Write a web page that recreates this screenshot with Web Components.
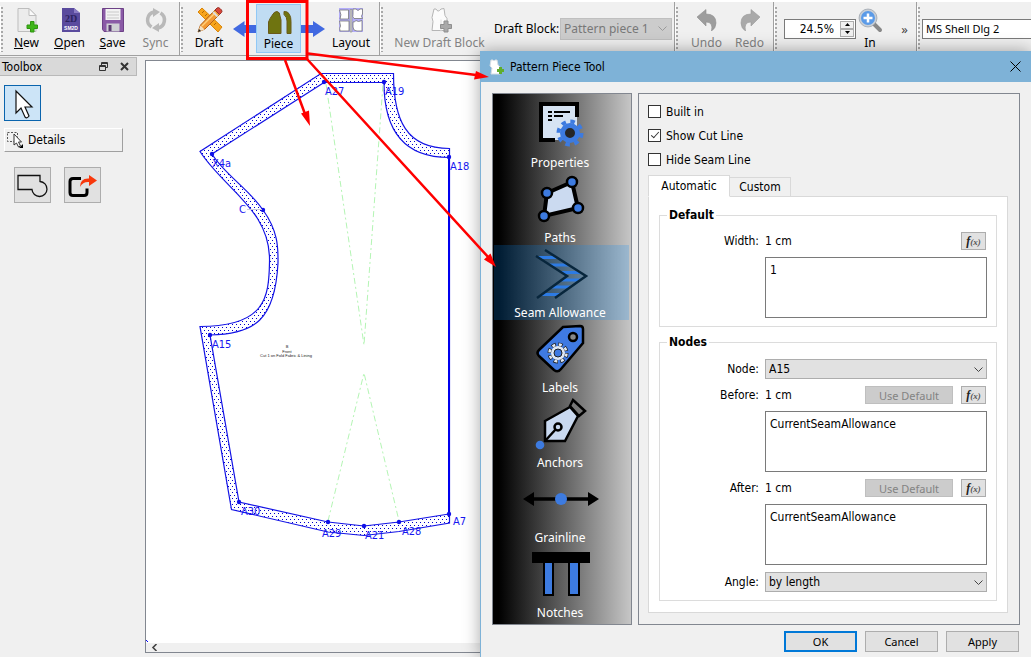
<!DOCTYPE html>
<html lang="en">
<head>
<meta charset="utf-8">
<title>Pattern Piece Tool</title>
<style>
  body {
    margin: 0;
    background: #f0f0f0;
    color: #000;
    --ui: "DejaVu Sans Condensed", "Noto Sans", sans-serif;
    --bar: "Noto Sans", "Open Sans", sans-serif;
    font: 12px/16px var(--ui);
  }
</style>
</head>
<body>
<app-window></app-window>

<script>
const define = (tag, html, setup) => {
  const tpl = document.createElement('template');
  tpl.innerHTML = html;
  customElements.define(tag, class extends HTMLElement {
    constructor() {
      super();
      this.attachShadow({ mode: 'open' }).append(tpl.content.cloneNode(true));
    }
    connectedCallback() { if (setup) setup(this, this.shadowRoot); }
  });
};

/* ---------- toolbar ---------- */
define('tool-group', `
<style>
  :host { display: flex; align-items: stretch; padding-right: 2px; border-right: 1px solid #a0a0a0; flex: none; }
  :host([last]) { flex: 1; border: 0; padding: 0; min-width: 0; }
  .grip { flex: none; width: 5px; margin: 4px 0 3px; box-shadow: inset 1px 0 #fff;
    background: radial-gradient(circle at 2px 2px, #a8a8a8 1px, transparent 1px) 0 0 / 5px 4px; }
  :host([roomy]) .grip { margin-right: 5px; }
</style>
<span class="grip"></span><slot></slot>`);

define('tool-button', `
<style>
  :host { display: block; flex: none; width: 43px; }
  :host([size="m"]) { width: 48px; }
  :host([size="l"]) { width: 52px; }
  :host([size="s"]) { width: 28px; }
  :host([size="xl"]) { width: 109px; }
  :host([active]) { width: 45px; }
  button { box-sizing: border-box; width: 100%; height: 100%; margin: 0; padding: 4px 0 0; border: 0; background: none;
    display: flex; flex-direction: column; align-items: center; font: 12px/18px var(--bar); color: #000; white-space: nowrap; }
  button:disabled { color: #838383; }
  :host([active]) button { height: 49px; margin-top: 2px; padding-top: 2px; border: 1px solid #90c8f6; background: #c0dcf3; }
  ::slotted(svg) { width: 28px; height: 28px; flex: none; }
  ::slotted(u) { text-decoration: underline; }
</style>
<button type="button"><slot name="icon"></slot><span><slot></slot></span></button>`,
(host, root) => { root.querySelector('button').disabled = host.hasAttribute('disabled'); });

define('flow-arrow', `
<style>
  :host { display: block; flex: none; width: 24px; padding-top: 18px; }
  :host([left]) { width: 23px; }
  :host([left]) svg { transform: scaleX(-1); }
  svg { display: block; width: 100%; height: 18px; }
</style>
<svg viewBox="0 0 24 18" preserveAspectRatio="none"><path d="M0 5H12V1L24 9L12 17V13H0Z" fill="#4169e1"/></svg>`);

define('main-toolbar', `
<style>
  :host { display: flex; height: 53px; border-top: 2px solid #fff; border-bottom: 1px solid #a0a0a0; overflow: hidden; font-family: var(--bar); }
  .lbl { align-self: center; width: 66px; line-height: 18px; }
  .sel { position: relative; align-self: center; }
  select { appearance: none; box-sizing: border-box; width: 112px; height: 22px; padding: 0 3px; margin: 0; border: 1px solid #bfbfbf; border-radius: 0;
    background: #ccc; color: #787878; font: 12px var(--bar); opacity: 1; }
  .sel svg { position: absolute; right: 5px; top: 7px; width: 9px; height: 8px; pointer-events: none; }
  .spin { align-self: center; display: flex; box-sizing: border-box; width: 72px; height: 20px; border: 1px solid #7a7a7a; background: #fff; }
  .spin input { flex: 1; min-width: 0; border: 0; padding: 0 5px 0 0; text-align: right; font: 12px var(--ui); background: none; }
  .spin span { display: flex; flex-direction: column; padding: 1px; gap: 0; }
  .spin button { width: 14px; height: 8px; padding: 0; border: 1px solid #adadad; background: #f0f0f0; display: grid; place-items: center; }
  .spin svg { width: 5px; height: 3px; }
  .more { border: 0; background: none; width: 30px; padding: 0 0 0 11px; font: 13px var(--bar); color: #444; }
  .font { flex: 1; min-width: 0; align-self: center; box-sizing: border-box; height: 20px; border: 1px solid #7a7a7a; border-right: 0; padding: 0 3px; font: 11px var(--bar); background: #fff; }
</style>
<tool-group>
  <tool-button><svg slot="icon" viewBox="0 0 28 28"><path d="M5 2.500h11l7 7V25.500H5z" fill="#ececec" stroke="#bdbdbd"/><path d="M16 2.500v7h7z" fill="#fafafa" stroke="#bdbdbd"/><path d="M17.500 15.500h3.500v3.500h3.500v3.500h-3.500v3.500h-3.500v-3.500H14v-3.500h3.500z" fill="#3fb618" stroke="#2f9410"/></svg><u>N</u>ew</tool-button>
  <tool-button><svg slot="icon" viewBox="0 0 28 28"><path d="M6 2h12l6 5v19H6z" fill="#5a4b9e"/><path d="M18 2v5h6z" fill="#8a7cc4"/><text x="15" y="16" font-family="Liberation Serif, serif" font-weight="bold" font-size="10" text-anchor="middle" fill="#2c2360">2D</text><text x="15" y="24" font-family="Liberation Sans, sans-serif" font-weight="bold" font-size="5" text-anchor="middle" fill="#fff">SM2D</text></svg><u>O</u>pen</tool-button>
  <tool-button><svg slot="icon" viewBox="0 0 28 28"><path d="M3.500 2.500h21v23H5l-1.500-2z" fill="#8a5aa6" stroke="#6d4187"/><path d="M6.500 3h15v11h-15z" fill="#f3f3f3"/><path d="M8 6h12M8 9h12M8 12h12" stroke="#c9c9c9"/><path d="M7.500 17.500h13v8h-13z" fill="#cfcfd4"/><path d="M9.500 19h3v6h-3z" fill="#5b3a73"/></svg><u>S</u>ave</tool-button>
  <tool-button disabled><svg slot="icon" viewBox="0 0 28 28"><g fill="none" stroke="#b9b9b9" stroke-width="3.500"><path d="M9.500 21A8.200 8.200 0 0 1 12 6"/><path d="M18.500 7A8.200 8.200 0 0 1 16 22"/></g><path d="M11 2l7 4-7 5zM17 26l-7-4 7-5z" fill="#b9b9b9"/></svg>Sync</tool-button>
</tool-group>
<tool-group>
  <tool-button size="m"><svg slot="icon" viewBox="0 0 28 28"><path d="M3 6l4-4 20 19-4 5z" fill="#f7a41d" stroke="#d98508"/><path d="M7 7l2-2m1 5l2-2m1 5l2-2m1 5l2-2m1 5l2-2" stroke="#b56a00"/><path d="M3 26l2.500-7L20 4l4.500 4.500L10 23z" fill="#f39a35" stroke="#b5651a"/><path d="M7 20L20.500 6.500" stroke="#ffcf7a" stroke-width="1.500"/><path d="M20 4l2-2q1.500-1 3 .5l1.500 1.500q1 1.500 0 2.500l-2 2z" fill="#d9463a" stroke="#963028"/><path d="M18 6l4.500 4.500" stroke="#ddd" stroke-width="2"/><path d="M3 26l2.500-6.500 4 4z" fill="#f4e0c0"/><path d="M3 26l1-3 2 2z" fill="#222"/></svg>Draft</tool-button>
  <flow-arrow left></flow-arrow>
  <tool-button active><svg slot="icon" viewBox="0 0 28 28"><path d="M3.500 26.500V15Q5 11 7 8.500 9 4.500 12 4.500q3 .5 3 4.500l1 4V26.500z" fill="#6f7410" stroke="#6a5a1a"/><path d="M19 4.500q4-.5 5.500 3 1.500 2.500 1.500 7v12h-4V14q0-4-3-6.500z" fill="#6f7410" stroke="#6a5a1a"/></svg>Piece</tool-button>
  <flow-arrow></flow-arrow>
  <tool-button size="l"><svg slot="icon" viewBox="0 0 28 28"><path d="M2 2h24v24H2z" fill="#b3adfa"/><g fill="#fff" stroke="#777" stroke-width=".8"><path d="M2.500 4h9V13H3q2-4-.5-9zM2.500 15H12v10H3q-1-3 .5-5zM16 3h3q2 3 4 0h2.500v5q-2 2 0 4.500H17q-2-2-1-4zM16 16q2 0 3-1.500 2 2 6 0V25h-5q-4 0-4-4z"/></g><path d="M13 3.500h2V26h-2z" fill="#ccc" stroke="#888" stroke-width=".6"/></svg>Layout</tool-button>
</tool-group>
<tool-group>
  <tool-button size="xl" disabled><svg slot="icon" viewBox="0 0 28 28"><path d="M8 3l2 0q2 4 5 0l3-.5 1 7 2 3v12H6l1-9-1-4z" fill="#fbfbfb" stroke="#b5b5b5"/><path d="M15 13.500v12" stroke="#ddd"/><path d="M18 15h4v3.500h3.500v4H22V26h-4v-3.500h-3.500v-4H18z" fill="#a9a9a9" stroke="#8f8f8f"/></svg>New Draft Block</tool-button>
  <label class="lbl" for="block">Draft Block:</label>
  <span class="sel"><select id="block" disabled><option>Pattern piece 1</option></select><svg viewBox="0 0 9 8"><path d="M0.500 1.500l4 4 4-4" fill="none" stroke="#9a9a9a"/></svg></span>
</tool-group>
<tool-group roomy>
  <tool-button disabled><svg slot="icon" viewBox="0 0 28 28"><path d="M4 11l9-7.500V8q10 0 10 9 0 5-4.500 8 2-9-5.500-9v4z" fill="#9d9d9d" stroke="#8e8e8e" stroke-width=".6"/></svg>Undo</tool-button>
  <tool-button disabled><svg slot="icon" viewBox="0 0 28 28"><path d="M24 11l-9-7.500V8Q5 8 5 17q0 5 4.500 8-2-9 5.500-9v4z" fill="#a9a9a9" stroke="#999" stroke-width=".6"/></svg>Redo</tool-button>
</tool-group>
<tool-group roomy>
  <span class="spin"><input type="text" value="24.5%" aria-label="Zoom"><span>
    <button type="button" aria-label="Zoom up"><svg viewBox="0 0 5 3"><path d="M0 3L2.500 0 5 3z"/></svg></button>
    <button type="button" aria-label="Zoom down"><svg viewBox="0 0 5 3"><path d="M0 0L2.500 3 5 0z"/></svg></button></span></span>
  <tool-button size="s"><svg slot="icon" viewBox="0 0 28 28"><path d="M17 17l7 7" stroke="#888" stroke-width="4" stroke-linecap="round"/><circle cx="12" cy="12" r="8" fill="#5b9be8" stroke="#c9cfd6" stroke-width="2"/><circle cx="12" cy="12" r="9" fill="none" stroke="#8b949e" stroke-width=".6"/><path d="M12 7.500v9M7.500 12h9" stroke="#fff" stroke-width="2.500"/></svg>In</tool-button>
  <button class="more" type="button" aria-label="More tools">»</button>
</tool-group>
<tool-group last><input class="font" type="text" value="MS Shell Dlg 2" aria-label="Font"></tool-group>`);

/* ---------- left dock ---------- */
define('tool-dock', `
<style>
  :host { display: block; flex: none; width: 137px; }
  header { display: flex; align-items: center; height: 17px; border: 1px solid #b9b9b9; border-left: 0; background: #d9d9d9; padding: 0 5px 0 2px; }
  header b { flex: 1; font-weight: normal; padding-top: 1px; }
  button { box-sizing: border-box; margin: 0; padding: 0; display: grid; place-items: center; font: inherit; }
  header button { border: 0; background: none; width: 13px; height: 13px; margin-left: 8px; }
  .tools { display: flex; flex-direction: column; align-items: flex-start; padding: 9px 0 0 4px; }
  .tile { width: 37px; height: 36px; border: 1px solid #adadad; background: #e1e1e1; }
  .on { border-color: #0a64ad; background: #cce4f7; }
  .section { display: flex; align-items: center; gap: 4px; width: 119px; height: 24px; margin: 7px 0 15px; padding-left: 1px; border: 1px solid; border-color: #fff #a0a0a0 #a0a0a0 #fff; background: #f0f0f0; }
  .row { display: flex; gap: 13px; padding-left: 10px; }
</style>
<header><b>Toolbox</b>
  <button type="button" aria-label="Float"><svg width="9" height="9" viewBox="0 0 9 9" fill="none" stroke="#333"><path d="M2.500 3V.5h6v5H6.500M2.500 1.500h6M.5 3.500h6v5h-6zM.5 4.500h6"/></svg></button>
  <button type="button" aria-label="Close"><svg width="9" height="9" viewBox="0 0 9 9"><path d="M1 1l7 7M8 1L1 8" stroke="#333" stroke-width="2"/></svg></button>
</header>
<div class="tools">
  <button class="tile on" type="button" aria-label="Select"><svg width="36" height="36" viewBox="0 0 36 36"><path d="M11 5v22l5-5 4 9q2 2 4-1l-4-9h7z" fill="#fff" stroke="#111" stroke-width="1.200"/></svg></button>
  <button class="section" type="button"><svg width="18" height="18" viewBox="0 0 18 18"><path d="M1.500 1.500h10v9h-10z" fill="none" stroke="#555" stroke-dasharray="2 1.500"/><path d="M8 3v11l2.500-2 2 4 2-1-2-4h3z" fill="#fff" stroke="#333"/><path d="M17 13v4h-4z"/></svg>Details</button>
  <div class="row">
    <button class="tile" type="button" aria-label="Union"><svg width="33" height="33" viewBox="0 0 33 33"><path d="M2 6.500h22v6a7.500 7.500 0 1 1-8 8H2z" fill="none" stroke="#111" stroke-width="1.300"/></svg></button>
    <button class="tile" type="button" aria-label="Export"><svg width="33" height="33" viewBox="0 0 33 33"><path d="M15 9.500H7q-3 0-3 3v11q0 3 3 3h11q3 0 3-3v-4" fill="none" stroke="#000" stroke-width="3"/><path d="M14 18q0-9 9-8.500V6l8 5.500-8 5.500v-4q-6-.5-9 5z" fill="#f8380c"/></svg></button>
  </div>
</div>`);

/* ---------- drawing canvas; node positions are scene coordinates ---------- */
define('pattern-canvas', `
<style>
  :host { display: flex; flex-direction: column; flex: 1; min-width: 0; border: 1px solid #828790; border-right: 0; background: #fff; }
  .scene { flex: 1; min-height: 0; overflow: hidden; }
  .scene svg { display: block; width: 500px; height: 582px; }
  .scroll { display: flex; align-items: center; height: 9px; background: #f0f0f0; padding-left: 5px; }
  .lab { font: 11px var(--ui); fill: #1616f0; }
  .tiny { font: 4px "Liberation Sans", sans-serif; fill: #222; text-anchor: middle; }
</style>
<div class="scene"><svg viewBox="146 61 500 582">
  <defs><pattern id="dots" width="4" height="6" patternUnits="userSpaceOnUse"><path d="M0 0h1v1H0zM2 3h1v1H2z" fill="#00c" shape-rendering="crispEdges"/></pattern></defs>
  <path fill="url(#dots)" fill-rule="evenodd" d="M321 73H393.500C393.500 120 406 149 449 149V523L364 535.500 328 532 231 509.500 200 326C265 326 269 298 269.500 262C271 210 225 190 200 151Z M324 82L212 154C224 174 249 189 263 210C279 232 278 250 278 263C275 320 255 334 210 335L239 502 328 522 364 526 399 522 449 514V157C399 157 384 125 384 82Z"/>
  <g fill="none" stroke="#1414e6" stroke-width="1.200">
    <path d="M321 73.500H393.500C393.500 120 406 148.500 449.500 148.500V523L399 531.500 364 535.500 328 532 231.500 509.500 200 326.500C265 326.500 269 298 269.500 262C271 210 225 190 200 151.500Z"/>
    <path d="M324 82.500L212 154C224 174 249 189 263 210C279 232 278 250 278 263C275 320 255 334 210 335L239 502 328 522 364 526 399 522 449 514M324 82.500H384C384 125 399 157.500 449 157.500"/>
  </g>
  <path d="M449 157V514" stroke="#00e" stroke-width="2"/>
  <g fill="none" stroke="#b4f5b4" stroke-dasharray="6 3 2 3"><path d="M326 84L364 345 383 84M328 521L364 373 399 521"/></g>
  <g fill="#1010e8"><circle cx="324" cy="82" r="2.200"/><circle cx="384" cy="82" r="2.200"/><circle cx="449" cy="157" r="2.200"/><circle cx="449" cy="514" r="2.200"/><circle cx="399" cy="522" r="2.200"/><circle cx="364" cy="526" r="2.200"/><circle cx="328" cy="522" r="2.200"/><circle cx="239" cy="502" r="2.200"/><circle cx="210" cy="335" r="2.200"/><circle cx="263" cy="210" r="2.200"/><circle cx="212" cy="154" r="2.200"/></g>
  <path d="M247 209.500h15" stroke="#ccd"/>
  <g class="lab"><text x="325" y="95">A27</text><text x="385" y="95">A19</text><text x="450" y="170">A18</text><text x="212" y="167">X4a</text><text x="239" y="213">C</text><text x="212" y="348">A15</text><text x="241" y="515">A30</text><text x="322" y="537">A29</text><text x="365" y="539">A21</text><text x="402" y="535">A28</text><text x="453" y="525">A7</text></g>
  <g class="tiny"><text x="287" y="348">B</text><text x="287" y="353">Front</text><text x="286" y="357">Cut 1 on Fold Fabric &amp; Lining</text></g>
  <path d="M146 640l2 2" stroke="#00f"/>
</svg></div>
<div class="scroll"><svg width="7" height="7" viewBox="0 0 7 7"><path d="M5.500 0L2 3.500 5.500 7" fill="none" stroke="#444" stroke-width="1.600"/></svg></div>`);

/* ---------- dialog parts ---------- */
define('page-item', `
<style>
  :host { display: block; }
  button { box-sizing: border-box; display: flex; flex-direction: column; align-items: center; width: 100%; height: 75px; margin: 0; padding: 0; border: 0; background: none; color: #fff; font: 12px/15px var(--bar); }
  :host([selected]) button { background: rgba(0, 140, 255, .2); }
  span { padding-right: 3px; }
  ::slotted(svg) { width: 135px; height: 60px; }
</style>
<button type="button"><slot name="icon"></slot><span><slot></slot></span></button>`);

define('page-list', `
<style>
  :host { display: block; box-sizing: border-box; flex: none; width: 140px; padding: 1px 2px 1px 1px; border: 1px solid #828790; background: linear-gradient(to right, #000 4%, #c6c6c6); }
</style>
<page-item><svg slot="icon" viewBox="0 0 135 60"><path d="M47 9h36v36H47z" fill="#d6e3f3"/><path d="M83 22V9H47V45H61" fill="none" stroke="#000" stroke-width="4"/><path d="M54 17h4m2 0h16M54 21h4m2 0h9M54 25h4" stroke="#000" stroke-width="2"/><circle cx="76" cy="38" r="11.500" fill="none" stroke="#3d7be0" stroke-width="4" stroke-dasharray="4.520 4.510"/><circle cx="76" cy="38" r="7.500" fill="#262626" stroke="#3d7be0" stroke-width="5"/></svg>Properties</page-item>
<page-item><svg slot="icon" viewBox="0 0 135 60"><path d="M53 23L78 12 84 38 50 46z" fill="#cbdaf0" stroke="#000" stroke-width="4"/><g fill="#3d7be0" stroke="#000" stroke-width="2.500"><circle cx="53" cy="23" r="5"/><circle cx="78" cy="12" r="5"/><circle cx="84" cy="38" r="5"/><circle cx="50" cy="46" r="5"/></g></svg>Paths</page-item>
<page-item selected><svg slot="icon" viewBox="0 0 135 60"><clipPath id="band"><path d="M51 5L92 31 61 53H43L73 31 42 11z"/></clipPath><path clip-path="url(#band)" d="M40 12.500h56M40 20h56M40 27.500h56M40 35h56M40 42h56M40 49.500h56" stroke="#2d7be4" stroke-width="3"/><path d="M51 5L92 31 61 53M42 11L73 31 43 53" fill="none" stroke="#08263c" stroke-width="2.500"/></svg>Seam Allowance</page-item>
<page-item><svg slot="icon" viewBox="0 0 135 60"><path d="M69 7L86 6Q89 6 89 9V23L67 49Q64 53 60 50L45 36Q42 33 45 30Z" fill="#3f7ae2" stroke="#000" stroke-width="2.500"/><circle cx="79" cy="17" r="4" fill="#888" stroke="#000" stroke-width="2.500"/><circle cx="64" cy="33" r="8.500" fill="none" stroke="#222" stroke-width="4" stroke-dasharray="4.300 2.370"/><circle cx="64" cy="33" r="8.500" fill="none" stroke="#dfe8f4" stroke-width="2.500" stroke-dasharray="3 3.670" stroke-dashoffset="-.6"/><circle cx="64" cy="33" r="7" fill="#dfe8f4"/><circle cx="64" cy="33" r="4" fill="#3f7ae2" stroke="#222"/></svg>Labels</page-item>
<page-item><svg slot="icon" viewBox="0 0 135 60"><path d="M51 26L76 12 84 21 71 46H51z" fill="#c9d9f0" stroke="#000" stroke-width="2.500"/><path d="M79 5L91 16 85 21 76 11z" fill="#777" stroke="#000" stroke-width="2.500"/><path d="M51 46L62 34" stroke="#000" stroke-width="2.500"/><circle cx="64" cy="32" r="3.500" fill="#c9d9f0" stroke="#000" stroke-width="2.500"/><circle cx="46" cy="50" r="4.300" fill="#3d7be0"/></svg>Anchors</page-item>
<page-item><svg slot="icon" viewBox="0 0 135 60"><path d="M36 29h62" stroke="#000" stroke-width="3.500"/><path d="M29 29l11-7v14zM105 29l-11-7v14z"/><circle cx="67" cy="29" r="6" fill="#3d7be0"/></svg>Grainline</page-item>
<page-item><svg slot="icon" viewBox="0 0 135 60"><path d="M50 17h9v33h-9zM75 17h10v33H75z" fill="#3d7be0" stroke="#000" stroke-width="2"/><path d="M38 7h58v11H38z"/></svg>Notches</page-item>`);

define('group-box', `
<style>
  :host { display: block; }
  fieldset { margin: 0; min-width: 0; padding: 9px 9px 8px 0; border: 1px solid #dcdcdc; }
  legend { margin-left: 7px; padding: 0 2px; font-weight: bold; }
  .grid { display: grid; grid-template-columns: 99px 1fr; gap: 7px 6px; align-items: center; }
</style>
<fieldset><legend><slot name="title"></slot></legend><div class="grid"><slot></slot></div></fieldset>`);

define('fx-button', `
<style>
  :host { display: block; }
  button { box-sizing: border-box; width: 25px; height: 18px; padding: 0; border: 1px solid #adadad; background: #e1e1e1; font: italic bold 12px/14px "Liberation Serif", serif; color: #222; display: block; }
  small { font-size: 9px; color: #555; }
</style>
<button type="button" aria-label="Formula wizard">f<small>(x)</small></button>`);

define('seam-form', `
<style>
  :host { display: flex; flex-direction: column; box-sizing: border-box; flex: 1; min-width: 0; border: 1px solid #828790; padding: 6px 11px 11px 9px; }
  .chk { display: flex; align-items: center; gap: 5px; height: 24px; }
  .chk input { appearance: none; position: relative; box-sizing: border-box; width: 13px; height: 13px; margin: 0 0 2px; border: 1px solid #333; background: #fff; }
  .chk input:checked::after { content: ""; position: absolute; left: 4px; top: 0; width: 3px; height: 7px; border: solid #333; border-width: 0 1px 1px 0; transform: rotate(42deg); }
  .tabs { display: flex; align-items: flex-end; padding-top: 3px; margin-bottom: -1px; }
  .tabs button { box-sizing: border-box; width: 61px; height: 20px; margin: 0; padding: 0; border: 1px solid #d9d9d9; border-left: 0; background: #f0f0f0; font: inherit; }
  .tabs .cur { position: relative; width: 82px; height: 22px; border-left: 1px solid #d9d9d9; border-bottom-color: #fff; background: #fff; }
  .pane { flex: 1; padding: 10px 10px 11px; border: 1px solid #d9d9d9; background: #fff; display: flex; flex-direction: column; gap: 7px; }
  .l { text-align: right; }
  .row { display: flex; align-items: center; gap: 8px; height: 18px; padding-right: 1px; }
  .row output { flex: 1; }
  .use { box-sizing: border-box; width: 88px; height: 18px; padding: 0; border: 1px solid #bfbfbf; background: #ccc; color: #838383; font: 11px var(--bar); }
  textarea { grid-column: 2; box-sizing: border-box; display: block; width: 100%; height: 61px; margin: 0; padding: 4px; border: 1px solid #7a7a7a; resize: none; font: inherit; background: #fff; color: #000; }
  .sel { position: relative; display: block; }
  .sel svg { position: absolute; right: 4px; top: 7px; width: 9px; height: 8px; pointer-events: none; }
  select { appearance: none; box-sizing: border-box; display: block; width: 100%; height: 20px; margin: 0; padding: 0 3px; border: 1px solid #adadad; border-radius: 0; background: #e1e1e1; font: inherit; color: #000; }
</style>
<label class="chk"><input type="checkbox">Built in</label>
<label class="chk"><input type="checkbox" checked>Show Cut Line</label>
<label class="chk"><input type="checkbox">Hide Seam Line</label>
<div class="tabs" role="tablist"><button class="cur" role="tab" type="button" aria-selected="true">Automatic</button><button role="tab" type="button">Custom</button></div>
<div class="pane" role="tabpanel">
  <group-box><span slot="title">Default</span>
    <label class="l" for="width">Width:</label><div class="row"><output>1 cm</output><fx-button></fx-button></div>
    <textarea id="width">1</textarea>
  </group-box>
  <group-box><span slot="title">Nodes</span>
    <label class="l" for="node">Node:</label><span class="sel"><select id="node"><option>A15</option></select><svg viewBox="0 0 9 8"><path d="M0.500 1.500l4 4 4-4" fill="none" stroke="#444"/></svg></span>
    <label class="l" for="before">Before:</label><div class="row"><output>1 cm</output><button class="use" type="button" disabled>Use Default</button><fx-button></fx-button></div>
    <textarea id="before">CurrentSeamAllowance</textarea>
    <label class="l" for="after">After:</label><div class="row"><output>1 cm</output><button class="use" type="button" disabled>Use Default</button><fx-button></fx-button></div>
    <textarea id="after">CurrentSeamAllowance</textarea>
    <label class="l" for="angle">Angle:</label><span class="sel"><select id="angle"><option>by length</option></select><svg viewBox="0 0 9 8"><path d="M0.500 1.500l4 4 4-4" fill="none" stroke="#444"/></svg></span>
  </group-box>
</div>`);

define('tool-dialog', `
<style>
  :host { display: flex; flex-direction: column; box-sizing: border-box; border-left: 1px solid #7eb2d7; background: #f0f0f0; box-shadow: 0 0 16px rgba(0, 0, 0, .35); }
  header { display: flex; align-items: center; height: 32px; padding: 0 9px 0 8px; background: #7eb2d7; }
  header b { flex: 1; padding-left: 5px; font-weight: normal; }
  header button { width: 13px; height: 13px; padding: 0; border: 0; background: none; display: grid; }
  .body { display: flex; gap: 6px; padding: 11px 11px 6px; }
  footer { display: flex; justify-content: flex-end; gap: 8px; padding: 0 12px 5px; }
  footer button { box-sizing: border-box; width: 73px; height: 21px; padding: 0; border: 1px solid #adadad; background: #e1e1e1; font: 11px var(--bar); color: #000; }
  footer .ok { border: 2px solid #0078d7; }
</style>
<header><svg width="16" height="16" viewBox="0 0 16 16"><path d="M2 1l2 0q1 2 2 0h2l1 5 2 2v7H2l1-6-2-2z" fill="#fff" stroke="#d5dde4"/><path d="M10 8h3v2h2v3h-2v2h-3v-2H8v-3h2z" fill="#5fae2c"/></svg><b>Pattern Piece Tool</b>
  <button type="button" aria-label="Close"><svg width="13" height="13" viewBox="0 0 13 13"><path d="M1.500 1.500l10 10M11.500 1.500l-10 10" stroke="#000"/></svg></button></header>
<div class="body"><page-list></page-list><seam-form></seam-form></div>
<footer><button class="ok" type="button">OK</button><button type="button">Cancel</button><button type="button">Apply</button></footer>`);

/* ---------- red call-outs over the window ---------- */
define('call-outs', `
<style>
  :host { display: block; pointer-events: none; }
  svg { display: block; width: 500px; height: 280px; }
</style>
<svg viewBox="0 0 500 280" fill="none" stroke="#f00">
  <path d="M247.500 1.500h59.500v57h-59.500z" stroke-width="3"/>
  <path d="M308 53.500L476 75M285 60L305 114M307 59L489 258" stroke-width="2.500"/>
  <path d="M489 77L474 79.500 476 71zM310 126L301 113.500 309 110.500zM496 267L484 259.500 490.500 253.500z" fill="#f00" stroke="none"/>
</svg>`);

define('app-window', `
<style>
  :host { display: flex; flex-direction: column; position: relative; min-height: 100vh; overflow: hidden; }
  .work { flex: 1; display: flex; gap: 8px; padding-top: 1px; }
  pattern-canvas { margin: 3px 0 4px; }
  tool-dialog { position: absolute; left: 480px; right: 0; top: 51px; bottom: 0; }
  call-outs { position: absolute; left: 0; top: 0; }
</style>
<main-toolbar></main-toolbar>
<div class="work"><tool-dock></tool-dock><pattern-canvas></pattern-canvas></div>
<tool-dialog></tool-dialog>
<call-outs></call-outs>`);
</script>
</body>
</html>
